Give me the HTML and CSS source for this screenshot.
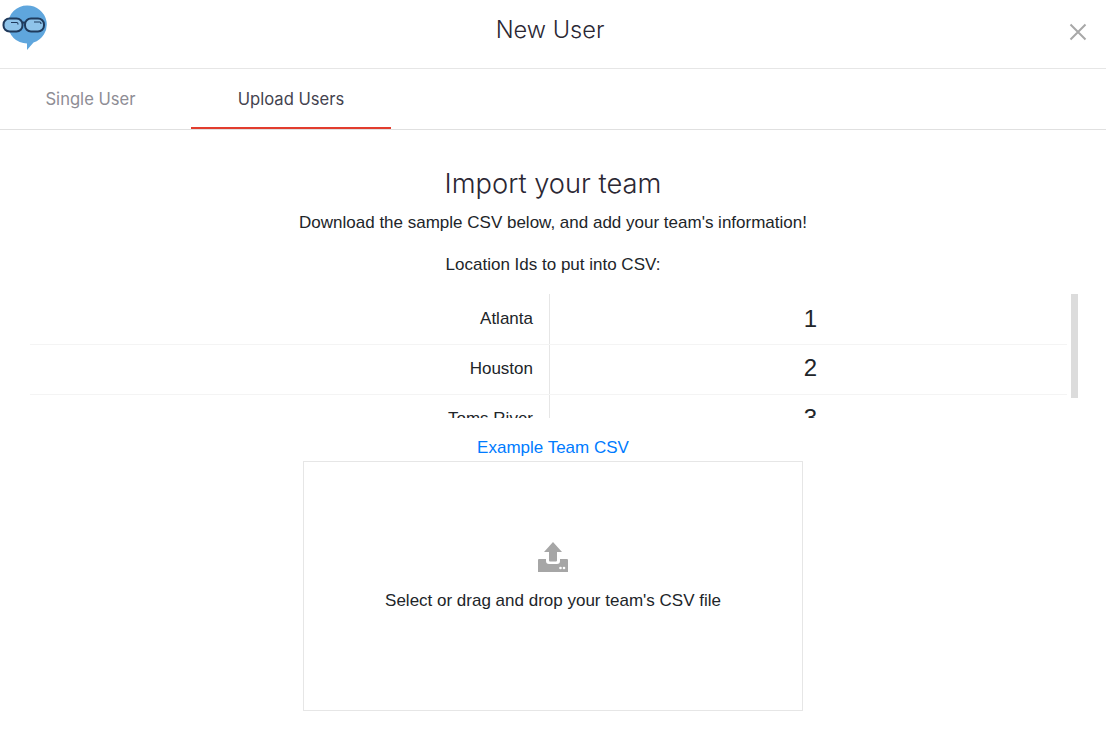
FILE: index.html
```html
<!DOCTYPE html>
<html lang="en">

<head>
    <meta charset="UTF-8">
    <meta name="viewport" content="width=device-width, initial-scale=1.0">
    <title>New User</title>
    <link rel="stylesheet" href="styles.css">
</head>

<body>
    <header class="top-bar">
        <svg class="logo" width="48" height="50" viewBox="0 0 48 50">
            <path d="M27 5.500a19.500 19 0 0 1 6.500 37L27 50v-6.500A19 19 0 0 1 27 5.500z" fill="#5fa6dd" />
            <rect x="3.500" y="18.500" width="19" height="13" rx="6" fill="#8fc4ea" stroke="#1f3a5c" stroke-width="2" />
            <rect x="25" y="18.500" width="19" height="13" rx="6" fill="#8fc4ea" stroke="#1f3a5c" stroke-width="2" />
            <path d="M22.500 23q1.300-1 2.500 0" fill="none" stroke="#1f3a5c" stroke-width="2" />
            <path d="M11 22.500h6q1 0 1 2M34 22h6q1 0 1 2" fill="none" stroke="#1f3a5c" stroke-width="1.200" />
        </svg>
        <h1 class="top-title">New User</h1>
        <button type="button" class="close-btn" aria-label="Close">
            <svg width="18" height="18" viewBox="0 0 18 18">
                <path d="M1.500 1.500l15 15M16.500 1.500l-15 15" stroke="#a8a8a8" stroke-width="2" />
            </svg>
        </button>
    </header>

    <nav class="tabs">
        <a class="tab tab-first">Single User</a>
        <a class="tab tab-active">Upload Users</a>
    </nav>

    <main class="content">
        <h2 class="import-title">Import your team</h2>
        <p class="intro">Download the sample CSV below, and add your team's information!</p>
        <p class="ids-label">Location Ids to put into CSV:</p>

        <div class="table-wrap">
            <div class="id-table">
                <div class="id-row">
                    <div class="id-name">Atlanta</div>
                    <div class="id-value">1</div>
                </div>
                <div class="id-row">
                    <div class="id-name">Houston</div>
                    <div class="id-value">2</div>
                </div>
                <div class="id-row">
                    <div class="id-name">Toms River</div>
                    <div class="id-value">3</div>
                </div>
            </div>
            <div class="scroll-track">
                <div class="scroll-thumb"></div>
            </div>
        </div>

        <a class="example-link">Example Team CSV</a>

        <div class="dropzone">
            <svg class="upload-icon" width="30" height="30" viewBox="0 0 30 30">
                <path d="M15 0l9 10h-5v8.500q0 1-1 1h-6q-1 0-1-1V10H6z" fill="#a6a6a6" />
                <path d="M1 17h7v2q0 3 3 3h8q3 0 3-3v-2h7q1 0 1 1v12H0V18q0-1 1-1z" fill="#a6a6a6" />
                <circle cx="22.500" cy="26" r="1.300" fill="#fff" />
                <circle cx="26" cy="26" r="1.300" fill="#fff" />
            </svg>
            <p class="drop-text">Select or drag and drop your team's CSV file</p>
        </div>
    </main>
</body>

</html>
```

FILE: styles.css
```css
body {
    margin: 0;
    font-family: "Liberation Sans", Arial, sans-serif;
    color: #212529;
    background-color: white;
    overflow: hidden;
}

.top-bar {
    display: flex;
    align-items: center;
    justify-content: center;
    height: 68px;
    border-bottom: 1px solid #e6e6e6;
    position: relative;
}

.logo {
    position: absolute;
    left: 0;
    top: 0;
}

.top-title {
    margin: 0 6px 10px 0;
    font-family: Inter, sans-serif;
    font-size: 23.6px;
    font-weight: 300;
    color: #2b2733;
}

.close-btn {
    position: absolute;
    right: 19px;
    top: 23px;
    padding: 0;
    border: none;
    background: none;
    line-height: 0;
}

.tabs {
    display: flex;
    height: 60px;
    border-bottom: 1px solid #e0e0e0;
}

.tab {
    display: flex;
    align-items: center;
    justify-content: center;
    box-sizing: border-box;
    width: 200px;
    padding-top: 1px;
    font-family: Inter, sans-serif;
    font-size: 16.6px;
    color: #8e8d95;
}

.tab-first {
    width: 181px;
    margin-right: 10px;
    padding-bottom: 2px;
}

.tab-active {
    color: #44434f;
    border-bottom: 2px solid #e23d2e;
}

.content {
    display: flex;
    flex-direction: column;
    align-items: center;
}

.import-title {
    margin: 38px 0 0;
    font-family: Inter, sans-serif;
    font-size: 27.3px;
    line-height: 32px;
    font-weight: 300;
    color: #2b2733;
}

.intro {
    margin: 11px 0 0;
    font-size: 17px;
    line-height: 24px;
}

.ids-label {
    margin: 18px 0 0;
    font-size: 17px;
    line-height: 24px;
}

.table-wrap {
    display: flex;
    align-self: stretch;
    height: 124px;
    margin: 17px 28px 0 30px;
    overflow: hidden;
}

.id-table {
    flex: 1;
}

.id-row {
    display: flex;
    height: 50px;
    box-sizing: border-box;
    border-bottom: 1px solid #f4f4f4;
}

.id-row:first-child {
    height: 51px;
}

.id-name {
    display: flex;
    align-items: center;
    justify-content: flex-end;
    box-sizing: border-box;
    width: 520px;
    padding: 0 16px 2px 0;
    border-right: 1px solid #e6e6e6;
    font-size: 17px;
}

.id-value {
    display: flex;
    align-items: center;
    justify-content: center;
    flex: 1;
    padding: 0 0 4px 4px;
    font-size: 24px;
}

.id-row:first-child .id-name,
.id-row:first-child .id-value {
    padding-bottom: 0;
}

.scroll-track {
    width: 7px;
    margin-left: 4px;
}

.scroll-thumb {
    height: 104px;
    background-color: #dcdcdc;
}

.example-link {
    margin-top: 18px;
    font-size: 17px;
    line-height: 24px;
    color: #007bff;
}

.dropzone {
    display: flex;
    flex-direction: column;
    align-items: center;
    box-sizing: border-box;
    width: 500px;
    height: 250px;
    margin-top: 1px;
    padding-top: 80px;
    border: 1px solid #e6e6e6;
}

.upload-icon {
    display: block;
}

.drop-text {
    margin: 17px 0 0;
    font-size: 17px;
    line-height: 24px;
}
```
